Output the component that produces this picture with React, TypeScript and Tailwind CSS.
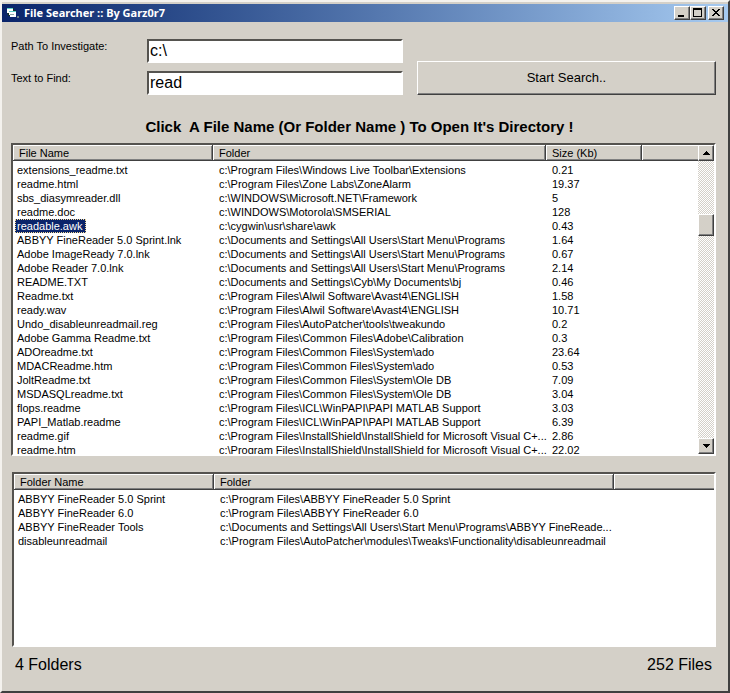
import React, { useState } from "react";

type FileRow = [name: string, folder: string, size: string];
type FolderRow = [name: string, folder: string];

const FILES: FileRow[] = [
  ["extensions_readme.txt", "c:\\Program Files\\Windows Live Toolbar\\Extensions", "0.21"],
  ["readme.html", "c:\\Program Files\\Zone Labs\\ZoneAlarm", "19.37"],
  ["sbs_diasymreader.dll", "c:\\WINDOWS\\Microsoft.NET\\Framework", "5"],
  ["readme.doc", "c:\\WINDOWS\\Motorola\\SMSERIAL", "128"],
  ["readable.awk", "c:\\cygwin\\usr\\share\\awk", "0.43"],
  ["ABBYY FineReader 5.0 Sprint.lnk", "c:\\Documents and Settings\\All Users\\Start Menu\\Programs", "1.64"],
  ["Adobe ImageReady 7.0.lnk", "c:\\Documents and Settings\\All Users\\Start Menu\\Programs", "0.67"],
  ["Adobe Reader 7.0.lnk", "c:\\Documents and Settings\\All Users\\Start Menu\\Programs", "2.14"],
  ["README.TXT", "c:\\Documents and Settings\\Cyb\\My Documents\\bj", "0.46"],
  ["Readme.txt", "c:\\Program Files\\Alwil Software\\Avast4\\ENGLISH", "1.58"],
  ["ready.wav", "c:\\Program Files\\Alwil Software\\Avast4\\ENGLISH", "10.71"],
  ["Undo_disableunreadmail.reg", "c:\\Program Files\\AutoPatcher\\tools\\tweakundo", "0.2"],
  ["Adobe Gamma Readme.txt", "c:\\Program Files\\Common Files\\Adobe\\Calibration", "0.3"],
  ["ADOreadme.txt", "c:\\Program Files\\Common Files\\System\\ado", "23.64"],
  ["MDACReadme.htm", "c:\\Program Files\\Common Files\\System\\ado", "0.53"],
  ["JoltReadme.txt", "c:\\Program Files\\Common Files\\System\\Ole DB", "7.09"],
  ["MSDASQLreadme.txt", "c:\\Program Files\\Common Files\\System\\Ole DB", "3.04"],
  ["flops.readme", "c:\\Program Files\\ICL\\WinPAPI\\PAPI MATLAB Support", "3.03"],
  ["PAPI_Matlab.readme", "c:\\Program Files\\ICL\\WinPAPI\\PAPI MATLAB Support", "6.39"],
  ["readme.gif", "c:\\Program Files\\InstallShield\\InstallShield for Microsoft Visual C+...", "2.86"],
  ["readme.htm", "c:\\Program Files\\InstallShield\\InstallShield for Microsoft Visual C+...", "22.02"],
];

const FOLDERS: FolderRow[] = [
  ["ABBYY FineReader 5.0 Sprint", "c:\\Program Files\\ABBYY FineReader 5.0 Sprint"],
  ["ABBYY FineReader 6.0", "c:\\Program Files\\ABBYY FineReader 6.0"],
  ["ABBYY FineReader Tools", "c:\\Documents and Settings\\All Users\\Start Menu\\Programs\\ABBYY FineReade..."],
  ["disableunreadmail", "c:\\Program Files\\AutoPatcher\\modules\\Tweaks\\Functionality\\disableunreadmail"],
];

const RAISED =
  "border border-t-white border-l-white border-r-[#404040] border-b-[#404040] bg-[#d4d0c8] shadow-[inset_-1px_-1px_0_#808080]";
const SUNKEN =
  "border-2 border-t-[#55534f] border-l-[#55534f] border-r-white border-b-white bg-white";

function CaptionButton({ label, children }: { label: string; children: React.ReactNode }) {
  return (
    <button type="button" aria-label={label} className={`flex h-[14px] w-4 items-center justify-center ${RAISED}`}>
      <svg width="12" height="10" viewBox="0 0 12 10" shapeRendering="crispEdges">
        {children}
      </svg>
    </button>
  );
}

function TitleBar() {
  return (
    <header className="flex h-[18px] items-center bg-gradient-to-r from-[#0a246a] to-[#a6caf0] pr-1 pl-1">
      <svg width="14" height="14" viewBox="0 0 14 14" shapeRendering="crispEdges" aria-hidden="true">
        <path d="M1 2h7v2h2v7H4v-1H2V8H1z" fill="#16312f" />
        <path d="M1 2h6v1H1z" fill="#5fd0c8" />
        <path d="M1 3h6v4H1z" fill="#fff" />
        <path d="M3 5h7v1H3z" fill="#5fd0c8" />
        <path d="M3 6h7v5H4V9H3z" fill="#fff" />
        <path d="M4 8h4v1H4z" fill="#8fa8a6" />
        <path d="M11 10h2v2h-2z" fill="#6b8088" />
      </svg>
      <h1 className="ml-1 flex-1 font-['Noto_Sans','Open_Sans',sans-serif] text-[11px] leading-[18px] font-bold text-white">
        File Searcher :: By Garz0r7
      </h1>
      <div className="flex">
        <CaptionButton label="Minimize">
          <path d="M2 7h6v2H2z" />
        </CaptionButton>
        <CaptionButton label="Maximize">
          <path fillRule="evenodd" d="M1 0h9v9H1zM2 2v6h7V2z" />
        </CaptionButton>
        <div className="ml-[2px] flex">
          <CaptionButton label="Close">
            <path d="M2 1h2v1h1v1h2V2h1V1h2v1H9v1H8v1H7v1h1v1h1v1h1v1H8V7H7V6H5v1H4v1H2V7h1V6h1V5h1V4H4V3H3V2H2z" />
          </CaptionButton>
        </div>
      </div>
    </header>
  );
}

function HeaderCell({ children }: { children?: React.ReactNode }) {
  return (
    <th
      scope="col"
      className="h-4 border-r border-b border-r-[#404040] border-b-[#404040] bg-[#d4d0c8] p-0 pl-1.5 text-left font-normal shadow-[inset_1px_1px_0_#fff,inset_-1px_-1px_0_#808080] last:border-r-0 last:shadow-[inset_1px_1px_0_#fff,inset_0_-1px_0_#808080]"
    >
      {children}
    </th>
  );
}

function ScrollBar() {
  return (
    <div className="flex w-4 flex-none flex-col bg-[repeating-conic-gradient(#fff_0_25%,#d4d0c8_0_50%)] bg-[length:2px_2px]">
      <button type="button" aria-label="Scroll up" className={`flex h-4 flex-none items-center justify-center ${RAISED}`}>
        <svg width="7" height="4" viewBox="0 0 7 4" shapeRendering="crispEdges">
          <path d="M3 0h1v1h1v1h1v1h1v1H0V3h1V2h1V1h1z" />
        </svg>
      </button>
      <div className="flex-[19]" />
      <div className={`h-[22px] flex-none ${RAISED}`} />
      <div className="flex-[73]" />
      <button type="button" aria-label="Scroll down" className={`flex h-4 flex-none items-center justify-center ${RAISED}`}>
        <svg width="7" height="4" viewBox="0 0 7 4" shapeRendering="crispEdges">
          <path d="M0 0h7v1H6v1H5v1H4v1H3V3H2V2H1V1H0z" />
        </svg>
      </button>
    </div>
  );
}

function FileList() {
  const [selected, setSelected] = useState(4);
  return (
    <section className={`flex h-[313px] ${SUNKEN}`}>
      <div className="min-w-0 flex-1 overflow-hidden">
        <table className="w-full table-fixed border-separate border-spacing-0">
          <colgroup>
            <col className="w-[200px]" />
            <col className="w-[333px]" />
            <col className="w-24" />
            <col />
          </colgroup>
          <thead>
            <tr>
              <HeaderCell>File Name</HeaderCell>
              <HeaderCell>Folder</HeaderCell>
              <HeaderCell>Size (Kb)</HeaderCell>
              <HeaderCell />
            </tr>
          </thead>
          <tbody>
            <tr aria-hidden="true" className="h-[2px]" />
            {FILES.map(([name, folder, size], i) => (
              <tr key={i} className="h-[14px] whitespace-nowrap" onClick={() => setSelected(i)}>
                <td className="p-0 pl-[2px]">
                  <span
                    className={
                      i === selected
                        ? "block w-fit bg-[#0a246a] pr-1 pl-[2px] text-white outline-1 -outline-offset-1 outline-dotted outline-[#f5db95]"
                        : "block w-fit pl-[2px]"
                    }
                  >
                    {name}
                  </span>
                </td>
                <td className="p-0 pl-1.5">{folder}</td>
                <td className="p-0 pl-1.5">{size}</td>
                <td className="p-0" />
              </tr>
            ))}
          </tbody>
        </table>
      </div>
      <ScrollBar />
    </section>
  );
}

function FolderList() {
  return (
    <section className={`mt-4 ml-px h-[175px] overflow-hidden ${SUNKEN}`}>
      <table className="w-full table-fixed border-separate border-spacing-0">
        <colgroup>
          <col className="w-[200px]" />
          <col className="w-[400px]" />
          <col />
        </colgroup>
        <thead>
          <tr>
            <HeaderCell>Folder Name</HeaderCell>
            <HeaderCell>Folder</HeaderCell>
            <HeaderCell />
          </tr>
        </thead>
        <tbody>
          <tr aria-hidden="true" className="h-[2px]" />
          {FOLDERS.map(([name, folder]) => (
            <tr key={name} className="h-[14px] whitespace-nowrap">
              <td className="p-0 pl-1">{name}</td>
              <td className="p-0 pl-1.5">{folder}</td>
              <td className="p-0" />
            </tr>
          ))}
        </tbody>
      </table>
    </section>
  );
}

function Field({ id, label, value }: { id: string; label: string; value: string }) {
  return (
    <div className="flex">
      <label htmlFor={id} className="w-[136px] flex-none">
        {label}
      </label>
      <input
        id={id}
        type="text"
        defaultValue={value}
        className={`h-6 min-w-0 flex-1 rounded-none px-px text-base leading-5 outline-none ${SUNKEN}`}
      />
    </div>
  );
}

export default function App() {
  return (
    <div className="flex min-h-screen w-full flex-col border-2 border-t-[#f4f2ee] border-r-[#404040] border-b-[#404040] border-l-[#f4f2ee] bg-[#d4d0c8] pt-[2px] font-['Liberation_Sans',Arial,sans-serif] text-[11px] leading-[14px] text-black">
      <TitleBar />
      <main className="flex flex-1 flex-col pt-[17px] pr-3 pl-[9px]">
        <form className="flex items-end gap-[14px]" onSubmit={(e) => e.preventDefault()}>
          <div className="flex flex-[393] flex-col gap-2">
            <Field id="path" label="Path To Investigate:" value="c:\" />
            <Field id="text" label="Text to Find:" value="read" />
          </div>
          <button type="submit" className={`h-[34px] flex-[298] text-[13px] ${RAISED}`}>
            Start Search..
          </button>
        </form>
        <h2 className="mt-6 mb-2 pr-2 text-center text-[15px] leading-4 font-bold whitespace-pre">
          {"Click  A File Name (Or Folder Name ) To Open It's Directory !"}
        </h2>
        <FileList />
        <FolderList />
        <footer className="mt-2 flex justify-between px-1 text-base leading-5">
          <span>4 Folders</span>
          <span>252 Files</span>
        </footer>
      </main>
    </div>
  );
}
